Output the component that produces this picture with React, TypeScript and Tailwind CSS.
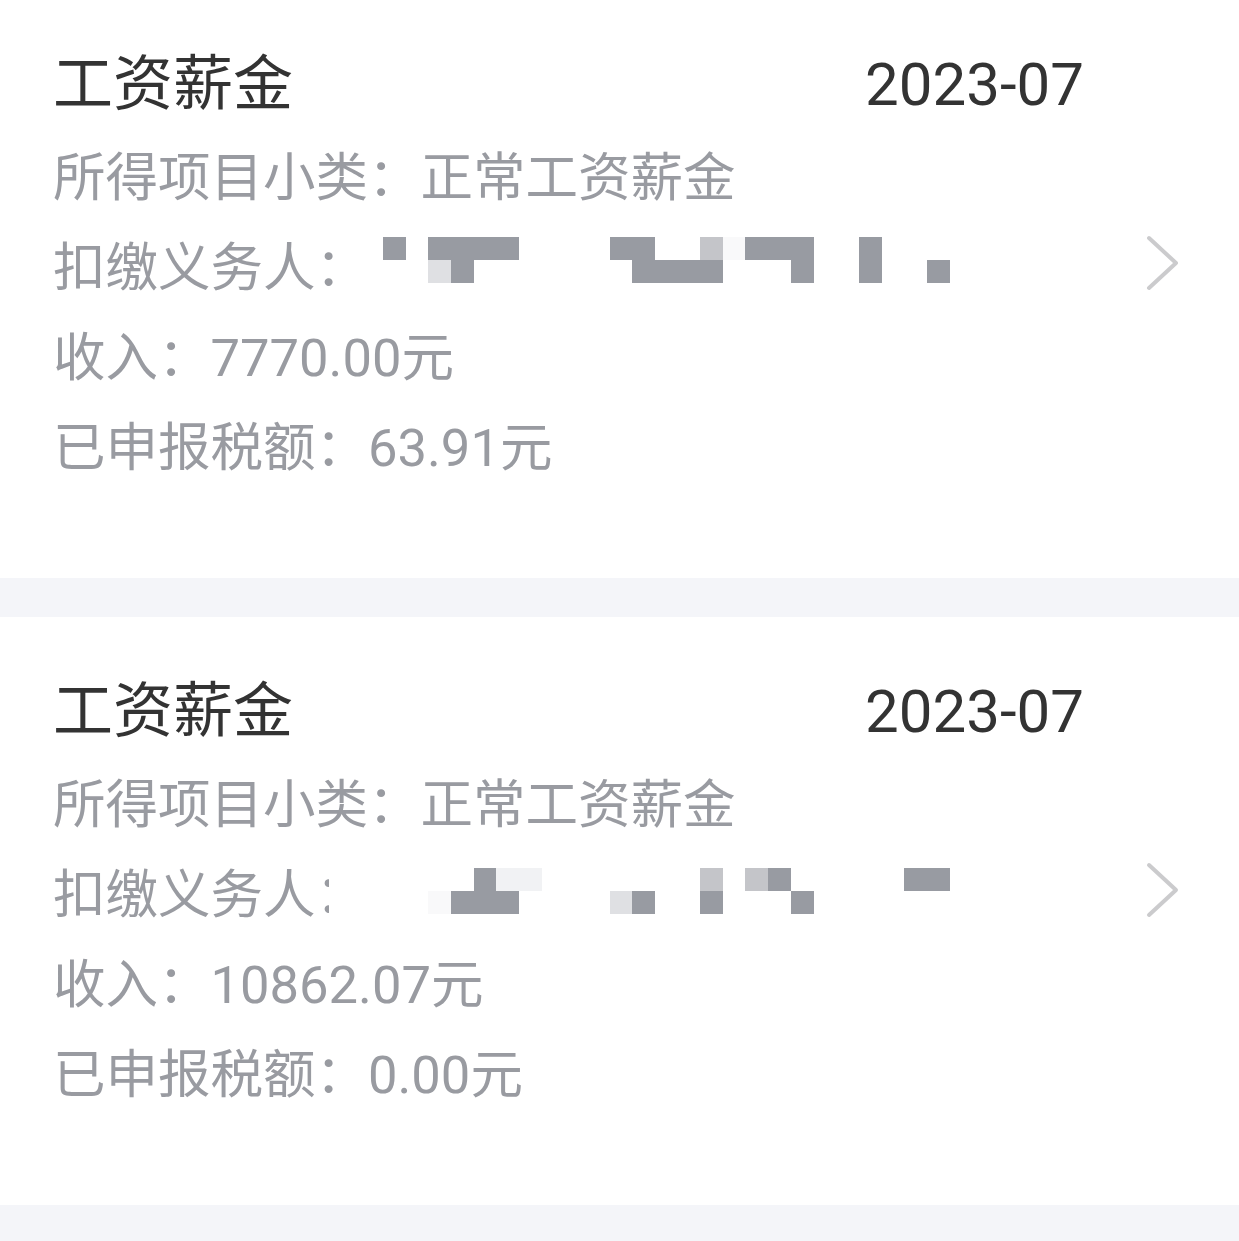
const D = "#989ba2";
const L = "#dfe0e3";
const M = "#c4c5c9";
const VL = "#f1f2f4";
const VVL = "#f9f9fa";

type Cell = [number, number, string];

const CELL = 22.65;

const records = [
  {
    income: "7770.00",
    tax: "63.91",
    maskTop: 14,
    hideColon: false,
    cells: [
      [0, 0, D], [2, 0, D], [3, 0, D], [4, 0, D], [5, 0, D], [2, 1, L], [3, 1, D],
      [10, 0, D], [11, 0, D], [11, 1, D], [12, 1, D], [13, 1, D], [14, 1, D], [14, 0, M], [15, 0, VVL],
      [16, 0, D], [17, 0, D], [18, 0, D], [18, 1, D],
      [21, 0, D], [21, 1, D],
      [24, 1, D],
    ] as Cell[],
  },
  {
    income: "10862.07",
    tax: "0.00",
    maskTop: 18,
    hideColon: true,
    cells: [
      [2, 1, VVL], [3, 1, D], [4, 1, D], [5, 1, D], [4, 0, D], [5, 0, VL], [6, 0, VL],
      [10, 1, L], [11, 1, D],
      [14, 0, M], [14, 1, D],
      [16, 0, M], [17, 0, D], [18, 1, D],
      [23, 0, D], [24, 0, D],
    ] as Cell[],
  },
];

const Chevron = () => (
  <svg className="w-[36px] h-[56px] shrink-0 -mt-[4px]" viewBox="0 0 36 56" fill="none">
    <path d="M4 3 L31 28 L4 53" stroke="#cbcbcd" strokeWidth="4" strokeLinecap="round" strokeLinejoin="round" />
  </svg>
);

const RecordCard = ({ r, first }: { r: (typeof records)[number]; first?: boolean }) => (
  <div className={`bg-white h-[588px] pt-[47px] pb-[85px] pl-[53px] pr-[58px] flex items-center ${first ? "-mt-[10px]" : ""}`}>
    <div className="flex-1 mr-[61px] self-start">
      {/* title + month */}
      <div className="h-[96px] flex items-center justify-between text-[#333333]">
        <span className="text-[60px] leading-[96px]">工资薪金</span>
        <span className="text-[60px] leading-[96px]">2023-07</span>
      </div>

      <div className="text-[52.5px] text-[#999ba1]">
        <div className="h-[90px] leading-[90px]">所得项目小类：正常工资薪金</div>
        <div className="h-[90px] leading-[90px] relative">
          扣缴义务人：
          {r.hideColon && <div className="absolute left-[276px] top-[8px] w-[34px] h-[74px] bg-white" />}
          {/* mosaic over the withholding agent name */}
          <div className="absolute left-[330px] top-0">
            {r.cells.map(([c, row, color], i) => (
              <div
                key={i}
                className="absolute"
                style={{ left: c * CELL, top: r.maskTop + row * CELL, width: CELL + 0.5, height: CELL + 0.5, background: color }}
              />
            ))}
          </div>
        </div>
        <div className="h-[90px] leading-[90px]">收入：{r.income}元</div>
        <div className="h-[90px] leading-[90px]">已申报税额：{r.tax}元</div>
      </div>
    </div>
    <Chevron />
  </div>
);

export default function App() {
  return (
    <div
      className="min-h-screen bg-[#f4f5f9] flex flex-col gap-[39px] overflow-hidden"
      style={{ fontFamily: 'Roboto, "Noto Sans CJK SC", sans-serif' }}
    >
      <RecordCard r={records[0]} first />
      <RecordCard r={records[1]} />
    </div>
  );
}
